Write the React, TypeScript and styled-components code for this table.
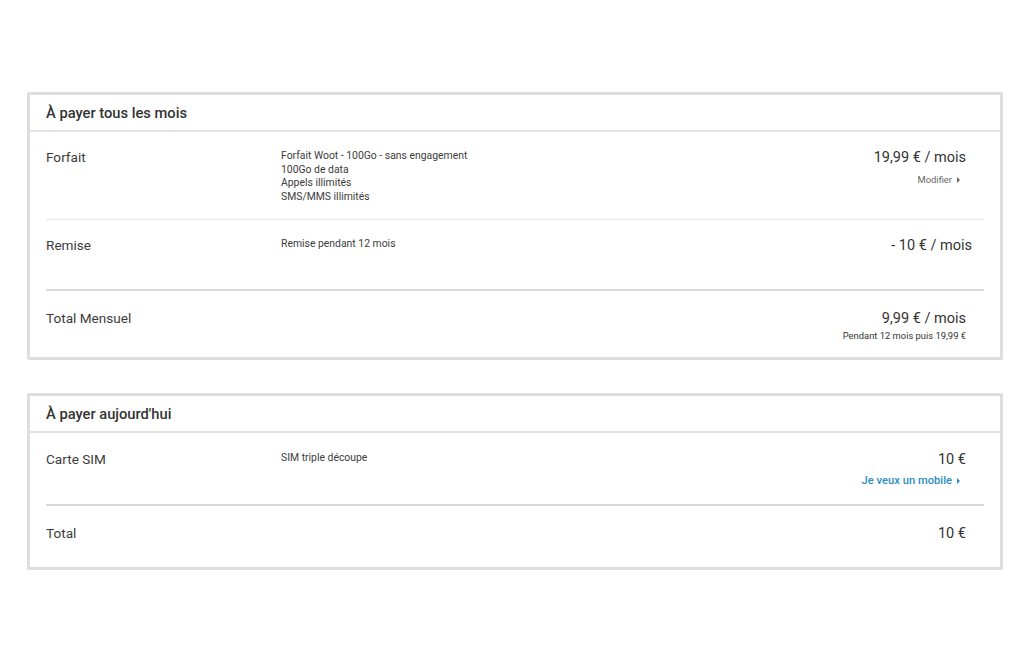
import React from "react";
import styled, { createGlobalStyle } from "styled-components";

const GlobalStyle = createGlobalStyle`
  html, body {
    margin: 0;
    padding: 0;
    background: #fff;
  }
  body {
    font-family: Roboto, "Liberation Sans", Arial, sans-serif;
    color: #3a3a3a;
  }
`;

const Page = styled.div`
  padding: 92px 21px 40px 27px;
  display: flex;
  flex-direction: column;
  gap: 33px;
`;

const Card = styled.section`
  border: 3px solid #dedede;
  border-radius: 2px;
  background: #fff;
`;

const CardHeader = styled.h3`
  margin: 0;
  height: 35px;
  padding: 0 16px;
  display: flex;
  align-items: center;
  font-size: 14.7px;
  font-weight: 500;
  color: #333;
  border-bottom: 2px solid #e2e2e2;
`;

const Body = styled.div`
  padding: 0 16px;
`;

const Row = styled.div<{ $minHeight: number; $top?: number; $divider?: "thin" | "thick" }>`
  display: grid;
  grid-template-columns: 235px 1fr auto;
  align-items: start;
  box-sizing: border-box;
  min-height: ${(p) => p.$minHeight}px;
  padding: ${(p) => p.$top || 16}px 18px 12px 0;
  border-bottom: ${(p) =>
    p.$divider === "thick"
      ? "2px solid #dadada"
      : p.$divider === "thin"
      ? "1px solid #e6e6e6"
      : "none"};
`;

const Label = styled.div`
  font-size: 13.6px;
  line-height: 18px;
  color: #3c3c3c;
`;

const Details = styled.div`
  font-size: 10.4px;
  line-height: 13.5px;
  color: #3c3c3c;
  padding-top: 1px;
`;

const Amount = styled.div<{ $shift?: number }>`
  display: flex;
  flex-direction: column;
  align-items: flex-end;
  margin-right: ${(p) => -(p.$shift || 0)}px;
`;

const Price = styled.div`
  font-size: 14.5px;
  line-height: 20px;
  color: #333;
  white-space: nowrap;
`;

const Note = styled.div`
  font-size: 9.4px;
  line-height: 12px;
  margin-top: 1px;
  color: #333;
  white-space: nowrap;
`;

const Action = styled.a<{ $blue?: boolean }>`
  display: flex;
  align-items: center;
  gap: 5px;
  margin-top: ${(p) => (p.$blue ? 4 : 5)}px;
  margin-right: 6px;
  font-size: ${(p) => (p.$blue ? "11.2px" : "9.4px")};
  font-weight: ${(p) => (p.$blue ? 500 : 400)};
  line-height: 13px;
  color: ${(p) => (p.$blue ? "#2b8dc4" : "#666")};
  text-decoration: none;
  cursor: pointer;
  white-space: nowrap;
`;

const Caret = styled.span`
  width: 0;
  height: 0;
  border-top: 3px solid transparent;
  border-bottom: 3px solid transparent;
  border-left: 3.5px solid currentColor;
`;

export default function App() {
  return (
    <>
      <GlobalStyle />
      <Page>
        <Card>
          <CardHeader>À payer tous les mois</CardHeader>
          <Body>
            <Row $minHeight={88} $divider="thin">
              <Label>Forfait</Label>
              <Details>
                Forfait Woot - 100Go - sans engagement
                <br />
                100Go de data
                <br />
                Appels illimités
                <br />
                SMS/MMS illimités
              </Details>
              <Amount>
                <Price>19,99 € / mois</Price>
                <Action>
                  Modifier <Caret />
                </Action>
              </Amount>
            </Row>
            <Row $minHeight={71} $divider="thick">
              <Label>Remise</Label>
              <Details>Remise pendant 12 mois</Details>
              <Amount $shift={6}>
                <Price>- 10 € / mois</Price>
              </Amount>
            </Row>
            <Row $minHeight={66} $top={18}>
              <Label>Total Mensuel</Label>
              <Details />
              <Amount>
                <Price>9,99 € / mois</Price>
                <Note>Pendant 12 mois puis 19,99 €</Note>
              </Amount>
            </Row>
          </Body>
        </Card>

        <Card>
          <CardHeader>À payer aujourd'hui</CardHeader>
          <Body>
            <Row $minHeight={73} $top={17} $divider="thick">
              <Label>Carte SIM</Label>
              <Details>SIM triple découpe</Details>
              <Amount>
                <Price>10 €</Price>
                <Action $blue>
                  Je veux un mobile <Caret />
                </Action>
              </Amount>
            </Row>
            <Row $minHeight={61} $top={18}>
              <Label>Total</Label>
              <Details />
              <Amount>
                <Price>10 €</Price>
              </Amount>
            </Row>
          </Body>
        </Card>
      </Page>
    </>
  );
}
